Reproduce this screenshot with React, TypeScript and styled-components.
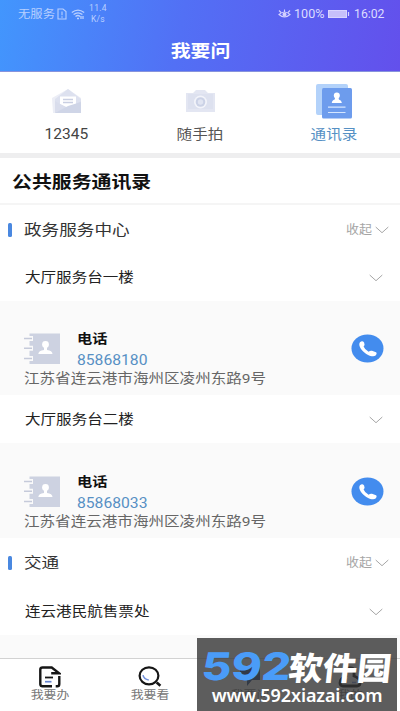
import React from 'react';
import styled, { createGlobalStyle } from 'styled-components';

const Global = createGlobalStyle`
  * { box-sizing: border-box; }
  body { margin: 0; background: #fff; font-family: Roboto, "Noto Sans CJK SC", sans-serif; }
  svg { display: block; flex: none; }
`;

const Screen = styled.div`
  width: 400px;
  height: 711px;
  display: flex;
  flex-direction: column;
  overflow: hidden;
  position: relative;
`;

/* Wide lettering: glyphs are stretched horizontally from the given origin. */
const Label = styled.span<{ $size: number; $wide?: number; $color?: string; $weight?: number; $origin?: string }>`
  display: block;
  white-space: nowrap;
  line-height: 18px;
  font-size: ${p => p.$size}px;
  font-weight: ${p => p.$weight ?? 400};
  color: ${p => p.$color ?? '#333'};
  transform: scaleX(${p => p.$wide ?? 1.17});
  transform-origin: ${p => p.$origin ?? 'left'} center;
`;

const Header = styled.header`
  height: 72px;
  flex: none;
  background: linear-gradient(100deg, #4296fd 0%, #5270f5 45%, #6350ec 100%);
  border-bottom: 1px solid #8793dc;
`;

const StatusBar = styled.div`
  height: 28px;
  display: flex;
  align-items: center;
  padding: 0 15px 0 18px;
  justify-content: space-between;
`;

const StatusGroup = styled.div`
  display: flex;
  align-items: center;
`;

const Carrier = styled.div`
  width: 39px;
  padding-top: 1px;
`;

const WifiSlot = styled.div`
  margin-left: 4px;
`;

const Speed = styled.div`
  margin-left: 3px;
  width: 20px;
  font-size: 8.5px;
  line-height: 11px;
  color: #b9cfff;
  text-align: center;
  letter-spacing: 0.3px;
`;

const Percent = styled.div`
  width: 34px;
  margin-left: 3px;
`;

const Clock = styled.div`
  width: 31px;
  margin-left: 4px;
`;

const PageTitle = styled.div`
  height: 43px;
  display: flex;
  align-items: center;
  justify-content: center;
  padding-top: 2px;
`;

const Tabs = styled.nav`
  height: 86px;
  flex: none;
  display: grid;
  grid-template-columns: 133px 134px 133px;
  border-bottom: 5px solid #eeeeef;
`;

const Tab = styled.div`
  display: flex;
  flex-direction: column;
  align-items: center;
`;

const TabIcon = styled.div`
  height: 54px;
  display: flex;
  align-items: center;
  padding-top: 4px;
`;

const Heading = styled.div`
  height: 47px;
  flex: none;
  display: flex;
  align-items: center;
  padding: 2px 0 0 12px;
  border-bottom: 2px solid #f5f5f5;
`;

const SectionRow = styled.div<{ $height: number }>`
  height: ${p => p.$height}px;
  flex: none;
  display: flex;
  align-items: center;
  padding: 1px 11px 0 8px;
`;

const Marker = styled.i`
  width: 4px;
  height: 14px;
  border-radius: 1.5px;
  background: #4a88e0;
  margin-right: 12px;
`;

const Collapse = styled.div`
  margin-left: auto;
  display: flex;
  align-items: center;
  gap: 3px;
`;

const ItemRow = styled.div<{ $height: number }>`
  height: ${p => p.$height}px;
  flex: none;
  display: flex;
  align-items: center;
  justify-content: space-between;
  padding: 2px 17px 0 25px;
`;

const Card = styled.div<{ $height: number; $top: number }>`
  height: ${p => p.$height}px;
  flex: none;
  background: #fafafa;
  padding: ${p => p.$top}px 16px 0 24px;
`;

const CardTop = styled.div`
  display: flex;
  height: 40px;
`;

const BookSlot = styled.div`
  width: 53px;
  padding-top: 3px;
`;

const Phone = styled.div`
  flex: 1;
  display: flex;
  flex-direction: column;
  align-items: flex-start;
  gap: 3px;
`;

const CallSlot = styled.div`
  padding-top: 4px;
`;

const Filler = styled.div`
  flex: 1;
  background: #fafafa;
`;

const BottomNav = styled.nav`
  height: 53px;
  flex: none;
  display: grid;
  grid-template-columns: repeat(4, 1fr);
  border-top: 1px solid #d2d2d2;
  padding-top: 7px;
`;

const NavItem = styled.div`
  display: flex;
  flex-direction: column;
  align-items: center;
`;

const NavIcon = styled.div`
  height: 21px;
`;

const Watermark = styled.div`
  position: absolute;
  left: 197px;
  top: 638px;
  width: 200px;
  height: 73px;
  background: rgba(56, 56, 56, 0.81);
  overflow: hidden;
`;

const Brand = styled.div`
  height: 38px;
  margin-top: 9px;
  display: flex;
  align-items: center;
  padding-left: 5px;
`;

const BrandNumber = styled.span`
  width: 87px;
  font: 800 38px/38px Inter, sans-serif;
  font-style: normal;
  color: #4a9cf8;
  white-space: nowrap;
  transform: skewX(-6deg) scaleX(1.2);
  transform-origin: left center;
`;

const BrandName = styled.span`
  font: 900 32px/38px "Noto Sans CJK SC", sans-serif;
  color: #fff;
  white-space: nowrap;
  transform: skewX(-6deg) scaleX(1.07);
  transform-origin: left center;
`;

const Site = styled.div`
  text-align: center;
  font: 600 18px/20px "Noto Sans", sans-serif;
  letter-spacing: -0.1px;
  color: #fff;
  white-space: nowrap;
`;

const Chevron = () => (
  <svg width="14" height="8" viewBox="0 0 14 8" fill="none" stroke="#a6a6a6" strokeWidth="1">
    <path d="M.7 1 7 6.7 13.3 1" />
  </svg>
);

const Mail = () => (
  <svg width="30" height="26" viewBox="0 0 30 26">
    <path d="M0 10 16 1l13 9v15H1z" fill="#eceef6" />
    <path d="M3 11 16 1l13 10v14H3z" fill="#dde1ef" />
    <path d="M8 8.500h16V16l-8 4-8-4z" fill="#fff" />
    <path d="M11 11.500h10M11 14.500h10" stroke="#c9cfe2" strokeWidth="1.400" />
    <path d="m3 13 5 3 8 4 8-4 5-3v12H3z" fill="#d9ddec" />
    <path d="m3 25 13-7 13-4v11z" fill="#cfd5e7" />
  </svg>
);

const Camera = () => (
  <svg width="31" height="24" viewBox="0 0 31 24">
    <path d="M1 4h7l3-3h9l3 3h7v19H1z" fill="#e3e6f2" />
    <path d="M3 5h25v15H3z" fill="#dde1ef" />
    <circle cx="15.5" cy="13" r="6.5" fill="#f3f4fa" />
    <circle cx="15.5" cy="13" r="4.8" fill="#cbd2e6" />
    <circle cx="15.5" cy="13" r="2.7" fill="#e1e5f2" />
  </svg>
);

const Contacts = () => (
  <svg width="38" height="36" viewBox="0 0 38 36">
    <path d="M1 3q0-2 2-2h28q2 0 2 2v3H7v26H3q-2 0-2-2z" fill="#b3d2fa" />
    <rect x="7" y="5" width="30" height="30.500" rx="1.500" fill="#6d9ced" />
    <circle cx="21.800" cy="12.500" r="3" fill="#fff" />
    <path d="M20.200 14h3.200l.5 2.500q2.700.5 3 3.500H16.800q.2-3 2.900-3.500z" fill="#fff" />
    <path d="M13 24.200h17.500M13 29.500h17.500" stroke="#d5e6ff" strokeWidth="1.200" />
  </svg>
);

const Book = () => (
  <svg width="37" height="31" viewBox="0 0 37 31">
    <path d="M5.500.5H36V31H5.500z" fill="#cdd2e1" />
    <path d="M1 3h8v5H1zM1 12.700h8v5H1zM1 23h8v5H1z" fill="#fafafa" />
    <path d="M0 5.500h8M0 15.200h8M0 25.500h8" stroke="#c5cada" strokeWidth="1.600" />
    <circle cx="21.500" cy="11.500" r="3.400" fill="#fff" />
    <path d="M20 14h3v3q5.300.5 5.500 4H14.300q.3-3.500 5.700-4z" fill="#fff" />
  </svg>
);

const Call = () => (
  <svg width="33" height="29" viewBox="0 0 33 29">
    <ellipse cx="16.500" cy="14.500" rx="16" ry="14" fill="#438cee" />
    <path d="M9 8.200q2.400-2 4.100.4 1.100 2.200-.5 4 1 3 5 5.100 1.800-1.500 3.400-.9l4 1.400q1.400 1-.4 3.400c-3 2-9.400-.8-12.900-4.700C8.500 13.500 7.500 10 9 8.200z" fill="#fff" />
  </svg>
);

const SimAlert = () => (
  <svg width="10" height="12" viewBox="0 0 10 12" fill="none" stroke="#b9d0ff" strokeWidth="1.1">
    <path d="M1 1h5l3 2.500V11H1zM5 3.500v3.800M5 8.300v1.400" />
  </svg>
);

const Wifi = () => (
  <svg width="14" height="11" viewBox="0 0 14 11" fill="none" stroke="#b9d0ff" strokeWidth="1.300">
    <path d="M.8 3.500Q7-1.200 13.200 3.500M2.600 5.600Q7 2 11.400 5.600M4.500 7.500Q7 5.500 9 7.500M6 9.500h2M10 7v3M12 7v3" />
  </svg>
);

const Eye = () => (
  <svg width="13" height="10" viewBox="0 0 13 10" fill="none" stroke="#d5d2ff" strokeWidth="1.100">
    <path d="M1 5.500Q6.500.5 12 5.500 6.500 10.500 1 5.500zM1 1.500 3 3.500M6.500.5v2.300M12 1.500l-2 2" />
    <circle cx="6.500" cy="5.600" r="1.500" fill="#d5d2ff" />
  </svg>
);

const Battery = () => (
  <svg width="22" height="8" viewBox="0 0 22 8">
    <rect x=".5" y=".5" width="18" height="7" fill="#c6c0fa" stroke="#d8d5ff" />
    <path d="M20.500 2v4" stroke="#d8d5ff" strokeWidth="1.200" />
  </svg>
);

const FormIcon = () => (
  <svg width="22" height="22" viewBox="0 0 22 22" fill="none" stroke="#161616" strokeWidth="2.400">
    <path d="M20.300 10v8q0 2.300-2 2.300h-1.600M13 20.300H3.500q-2.200 0-2.200-2V3.500q0-2 2.200-2h9.200l7.500 5.800h-8" />
    <path d="M6 11.500h8" strokeWidth="1.800" />
    <path d="M6 15.700h6.500" stroke="#6684d0" strokeWidth="1.700" />
  </svg>
);

const SearchIcon = () => (
  <svg width="24" height="22" viewBox="0 0 24 22" fill="none" stroke="#161616" strokeWidth="2.200">
    <ellipse cx="11" cy="9.800" rx="9.400" ry="8.500" />
    <path d="m18.700 16.500 3.700 3.300" strokeWidth="2.600" />
    <path d="M5 9.200q.8 4.200 5.800 4.700" stroke="#7492dc" strokeWidth="1.500" />
  </svg>
);

const ChatIcon = () => (
  <svg width="24" height="22" viewBox="0 0 24 22">
    <path d="M2 1h20v13h-8l-5 6v-6H2z" fill="#1c3f86" />
  </svg>
);

const UserIcon = () => (
  <svg width="24" height="22" viewBox="0 0 24 22" fill="none" stroke="#000" strokeWidth="2.800">
    <path d="M8 10V5q0-3 4-3t4 3v5q6 2 6 7 0 3-3 3H5q-3 0-3-3 0-5 6-7z" />
    <path d="M14 16.500h4" stroke="#7492dc" strokeWidth="1.500" />
  </svg>
);

const Section = ({ name, height }: { name: string; height: number }) => (
  <SectionRow $height={height}>
    <Marker />
    <Label $size={15.2} $wide={1.16}>{name}</Label>
    <Collapse>
      <Label $size={12} $wide={1.08} $color="#a5a5a5" $origin="right">收起</Label>
      <Chevron />
    </Collapse>
  </SectionRow>
);

const Item = ({ name, height }: { name: string; height: number }) => (
  <ItemRow $height={height}>
    <Label $size={13.3} $color="#222">{name}</Label>
    <Chevron />
  </ItemRow>
);

const ContactCard = ({ number, height, top }: { number: string; height: number; top: number }) => (
  <Card $height={height} $top={top}>
    <CardTop>
      <BookSlot><Book /></BookSlot>
      <Phone>
        <Label $size={13} $weight={700} $color="#111">电话</Label>
        <Label $size={14} $wide={1.12} $color="#5790c4">{number}</Label>
      </Phone>
      <CallSlot><Call /></CallSlot>
    </CardTop>
    <Label $size={13.3} $color="#666">江苏省连云港市海州区凌州东路9号</Label>
  </Card>
);

const navItems = [
  { label: '我要办', Icon: FormIcon },
  { label: '我要看', Icon: SearchIcon },
  { label: '我要问', Icon: ChatIcon },
  { label: '我的', Icon: UserIcon },
];

export default function App() {
  return (
    <>
      <Global />
      <Screen>
        <Header>
          <StatusBar>
            <StatusGroup>
              <Carrier><Label $size={11} $wide={1.12} $color="#b9d0ff">无服务</Label></Carrier>
              <SimAlert />
              <WifiSlot><Wifi /></WifiSlot>
              <Speed>11.4<br />K/s</Speed>
            </StatusGroup>
            <StatusGroup>
              <Eye />
              <Percent><Label $size={12} $wide={1.05} $color="#dcdcff">100%</Label></Percent>
              <Battery />
              <Clock><Label $size={12} $wide={1.02} $color="#dcdcff">16:02</Label></Clock>
            </StatusGroup>
          </StatusBar>
          <PageTitle><Label $size={17} $weight={700} $color="#fff" $origin="center">我要问</Label></PageTitle>
        </Header>
        <Tabs>
          <Tab>
            <TabIcon><Mail /></TabIcon>
            <Label $size={14.5} $wide={1.07} $color="#444" $origin="center">12345</Label>
          </Tab>
          <Tab>
            <TabIcon><Camera /></TabIcon>
            <Label $size={13.3} $color="#555" $origin="center">随手拍</Label>
          </Tab>
          <Tab>
            <TabIcon><Contacts /></TabIcon>
            <Label $size={13.3} $color="#5590c4" $origin="center">通讯录</Label>
          </Tab>
        </Tabs>
        <Heading><Label $size={17} $weight={700} $color="#111">公共服务通讯录</Label></Heading>
        <Section name="政务服务中心" height={48} />
        <Item name="大厅服务台一楼" height={48} />
        <ContactCard number="85868180" height={94} top={29} />
        <Item name="大厅服务台二楼" height={48} />
        <ContactCard number="85868033" height={95} top={30} />
        <Section name="交通" height={49} />
        <Item name="连云港民航售票处" height={48} />
        <Filler />
        <BottomNav>
          {navItems.map(({ label, Icon }) => (
            <NavItem key={label}>
              <NavIcon><Icon /></NavIcon>
              <Label $size={11.3} $wide={1.14} $color="#777" $origin="center">{label}</Label>
            </NavItem>
          ))}
        </BottomNav>
        <Watermark>
          <Brand>
            <BrandNumber>592</BrandNumber>
            <BrandName>软件园</BrandName>
          </Brand>
          <Site>www.592xiazai.com</Site>
        </Watermark>
      </Screen>
    </>
  );
}
